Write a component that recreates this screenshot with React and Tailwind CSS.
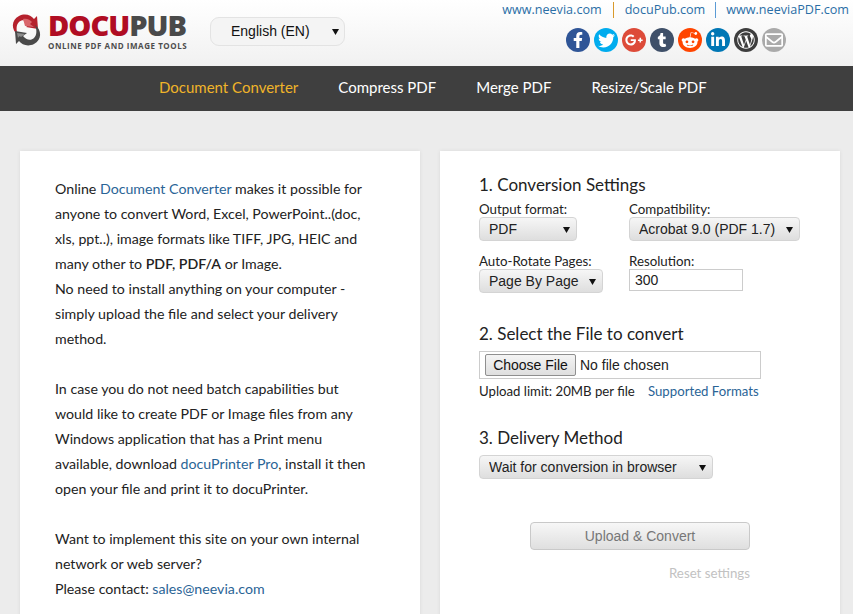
import React from "react";
import {
  FaFacebookF,
  FaTwitter,
  FaGooglePlusG,
  FaTumblr,
  FaRedditAlien,
  FaLinkedinIn,
  FaWordpressSimple,
  FaRegEnvelope,
} from "react-icons/fa";

const socials = [
  { icon: FaFacebookF, bg: "bg-[#2f5597]", size: 16 },
  { icon: FaTwitter, bg: "bg-[#00acee]", size: 17 },
  { icon: FaGooglePlusG, bg: "bg-[#dd4b39]", size: 18 },
  { icon: FaTumblr, bg: "bg-[#3f5069]", size: 14 },
  { icon: FaRedditAlien, bg: "bg-[#ff4500]", size: 18 },
  { icon: FaLinkedinIn, bg: "bg-[#0077b5]", size: 16 },
  { icon: FaWordpressSimple, bg: "bg-[#3e3e3e]", size: 18 },
  { icon: FaRegEnvelope, bg: "bg-[#aaaaaa]", size: 18 },
];

const Logo = () => (
  <div className="flex items-start w-[185px] shrink-0">
    <svg width="33" height="34" viewBox="0 0 33 34" className="mt-[13px] ml-[10px] shrink-0">
      <path d="M8 22 C1 17 1 7 9 3 C15 0 21 2 24 6 L27 3 L28 16 L16 14 L20 11 C17 7 12 6 9 9 C6 12 6 17 8 22 Z" fill="#b5212d" />
      <path d="M13 6 C17 5 20 7 22 9 L20 11 L24 14 L15 13 Z" fill="#d9666c" />
      <path d="M25 12 C32 17 32 27 24 31 C18 34 12 32 9 28 L6 31 L5 18 L17 20 L13 23 C16 27 21 28 24 25 C27 22 27 17 25 12 Z" fill="#4a4a4a" />
      <path d="M7 20 L15 21 L11 24 C10 23 9 23 8 25 Z" fill="#8c8c8c" />
    </svg>
    <div className="ml-[5px] mt-[9px] font-['Open_Sans',sans-serif]">
      <div className="text-[29px] leading-[32px] font-extrabold tracking-[-1px]">
        <span className="text-[#b00d23]">DOCU</span>
        <span className="text-[#4a4a4a]">PUB</span>
      </div>
      <div className="text-[8px] leading-[9px] font-bold tracking-[0.55px] text-[#4d4d4d] whitespace-nowrap">
        ONLINE PDF AND IMAGE TOOLS
      </div>
    </div>
  </div>
);

const Arrow = ({ className }) => (
  <svg width="7" height="7" viewBox="0 0 7 7" className={className}>
    <path d="M0 1 H7 L3.5 7 Z" fill="#111" />
  </svg>
);

const Select = ({ value, width }) => (
  <div className={`relative h-6 ${width}`}>
    <select
      defaultValue={value}
      className="appearance-none w-full h-full pl-[9px] rounded-[4px] border border-[#d4d4d4] bg-gradient-to-b from-[#f6f6f6] to-[#dedede] text-[14px] text-[#222] font-['Liberation_Sans',sans-serif] outline-none"
    >
      <option>{value}</option>
    </select>
    <Arrow className="absolute top-[9px] right-[7px] pointer-events-none" />
  </div>
);

const A = ({ children }) => <a className="text-[#2a6496]">{children}</a>;

const App = () => {
  return (
    <div className="h-screen overflow-hidden bg-[#ececec] font-['Lato',sans-serif] text-[14.2px] text-[#222]">
      {/* header */}
      <div className="h-[66px] flex justify-between bg-gradient-to-b from-white to-[#f1f1f1]">
        <div className="flex items-start">
          <Logo />
          <div className="relative ml-[25px] mt-[17px] w-[135px] h-[29px] rounded-[9px] border border-[#e3e3e3] bg-[#f4f4f4] font-['Liberation_Sans',sans-serif] text-[14px] leading-[27px] pl-5 text-[#111]">
            English (EN)
            <Arrow className="absolute right-[5px] top-[10px]" />
          </div>
        </div>
        <div className="pr-1 flex flex-col items-end">
          <div className="flex items-center h-5 font-['Open_Sans',sans-serif] text-[12.6px] text-[#2a6ea6] whitespace-nowrap">
            <a>www.neevia.com</a>
            <span className="w-px h-4 mx-[11px] bg-[#d99a2b]" />
            <a>docuPub.com</a>
            <span className="w-px h-4 mx-[10px] bg-[#5b9bd5]" />
            <a>www.neeviaPDF.com</a>
          </div>
          <div className="flex gap-1 mt-2 mr-[63px]">
            {socials.map((s, i) => (
              <div key={i} className={`w-6 h-6 rounded-full flex items-center justify-center text-white ${s.bg}`}>
                <s.icon size={s.size} />
              </div>
            ))}
          </div>
        </div>
      </div>

      {/* nav */}
      <div className="h-[45px] bg-[#3f3f3f] flex items-center gap-10 pl-[159px] pb-[3px] text-[15px] text-white whitespace-nowrap">
        <a className="text-[#f0b429]">Document Converter</a>
        <a>Compress PDF</a>
        <a>Merge PDF</a>
        <a>Resize/Scale PDF</a>
      </div>

      {/* cards */}
      <div className="flex gap-5 px-5 pt-10">
        <div className="w-[400px] h-[600px] shrink-0 bg-white shadow-[0_0_4px_rgba(0,0,0,0.08)] pl-[35px] pr-[50px] pt-[25px] leading-[25px]">
          <p>
            Online <A>Document Converter</A> makes it possible for anyone to convert Word, Excel, PowerPoint..(doc, xls, ppt..), image formats like TIFF, JPG, HEIC and many other to <b className="font-semibold">PDF, PDF/A</b> or Image.
          </p>
          <p>No need to install anything on your computer - simply upload the file and select your delivery method.</p>
          <p className="mt-[25px]">
            In case you do not need batch capabilities but would like to create PDF or Image files from any Windows application that has a Print menu available, download <A>docuPrinter Pro</A>, install it then open your file and print it to docuPrinter.
          </p>
          <p className="mt-[25px]">
            Want to implement this site on your own internal network or web server?
            <br />
            Please contact: <A>sales@neevia.com</A>
          </p>
        </div>

        <div className="w-[400px] h-[600px] shrink-0 bg-white shadow-[0_0_4px_rgba(0,0,0,0.08)] pl-[39px] pt-[22px]">
          <h2 className="text-[17px] leading-[24px]">1. Conversion Settings</h2>
          <div className="grid grid-cols-[150px_auto] justify-start mt-[4px]">
            <div>
              <div className="h-4 leading-[17px] text-[13.3px]">Output format:</div>
              <Select value="PDF" width="w-[98px]" />
            </div>
            <div>
              <div className="h-4 leading-[17px] text-[13.3px]">Compatibility:</div>
              <Select value="Acrobat 9.0 (PDF 1.7)" width="w-[171px]" />
            </div>
            <div className="mt-[12px]">
              <div className="h-4 leading-[17px] text-[13.3px]">Auto-Rotate Pages:</div>
              <Select value="Page By Page" width="w-[124px]" />
            </div>
            <div className="mt-[12px]">
              <div className="h-4 leading-[17px] text-[13.3px]">Resolution:</div>
              <input
                defaultValue="300"
                className="block w-[114px] h-[22px] pl-[5px] border border-[#cccccc] text-[14px] font-['Liberation_Sans',sans-serif] outline-none"
              />
            </div>
          </div>

          <h2 className="text-[17px] leading-[24px] mt-[29px]">2. Select the File to convert</h2>
          <div className="mt-[5px] w-[282px] h-7 border border-[#cccccc] flex items-center pl-[5px] font-['Liberation_Sans',sans-serif] text-[14px]">
            <button className="w-[91px] h-[22px] border border-[#8f8f8f] rounded-[2px] bg-gradient-to-b from-[#f4f4f4] to-[#dfdfdf] text-[#111] leading-none">
              Choose File
            </button>
            <span className="ml-1">No file chosen</span>
          </div>
          <div className="flex mt-[3px] leading-[18px] text-[13.2px] whitespace-nowrap">
            <span className="w-[169px]">Upload limit: 20MB per file</span>
            <A>Supported Formats</A>
          </div>

          <h2 className="text-[17px] leading-[24px] mt-[26px]">3. Delivery Method</h2>
          <div className="mt-[5px]">
            <Select value="Wait for conversion in browser" width="w-[234px]" />
          </div>

          <button className="block mt-[43px] ml-[51px] w-[220px] h-7 rounded-[4px] border border-[#c9c9c9] bg-gradient-to-b from-[#f7f7f7] to-[#dfdfdf] font-['Liberation_Sans',sans-serif] text-[14px] text-[#777]">
            Upload &amp; Convert
          </button>
          <div className="w-[271px] text-right mt-[14px] leading-[18px] text-[13.3px] text-[#c2c2c2]">Reset settings</div>
        </div>
      </div>
    </div>
  );
};

export default App;
